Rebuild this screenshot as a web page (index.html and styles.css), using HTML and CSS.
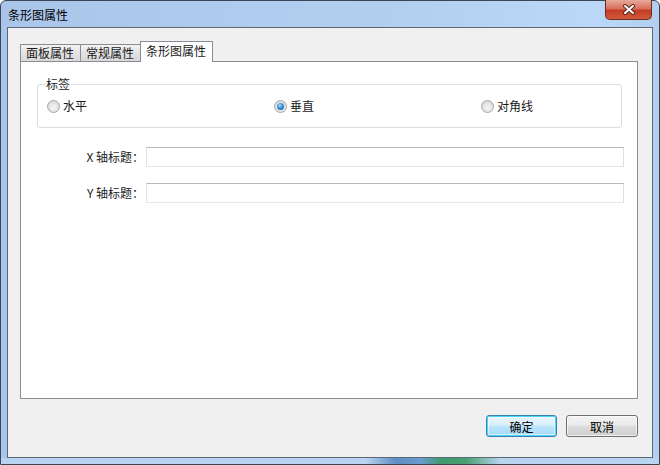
FILE: index.html
```html
<!DOCTYPE html>
<html lang="zh-CN">

<head>
    <meta charset="UTF-8" />
    <title>条形图属性</title>
    <link rel="stylesheet" href="styles.css">
</head>

<body>
    <div class="window">
        <div class="titlebar">
            <span class="title">条形图属性</span>
            <div class="close">
                <svg width="14" height="11" viewBox="0 0 14 11">
                    <path d="M3 2 L11 9 M11 2 L3 9" stroke="#5a2a22" stroke-width="4" stroke-linecap="round" />
                    <path d="M3 2 L11 9 M11 2 L3 9" stroke="#ffffff" stroke-width="2" stroke-linecap="round" />
                </svg>
            </div>
        </div>

        <div class="client">
            <ul class="tabs">
                <li>面板属性</li>
                <li>常规属性</li>
                <li class="active">条形图属性</li>
            </ul>

            <div class="panel">
                <fieldset class="group">
                    <legend>标签</legend>
                    <div class="radios">
                        <label class="option"><span class="radio"></span>水平</label>
                        <label class="option"><span class="radio on"></span>垂直</label>
                        <label class="option"><span class="radio"></span>对角线</label>
                    </div>
                </fieldset>

                <div class="form-row">
                    <label>X 轴标题：</label>
                    <input type="text" class="textbox">
                </div>
                <div class="form-row">
                    <label>Y 轴标题：</label>
                    <input type="text" class="textbox">
                </div>
            </div>

            <div class="buttons">
                <button class="btn default">确定</button>
                <button class="btn">取消</button>
            </div>
        </div>
    </div>
</body>

</html>
```

FILE: styles.css
```css
* {
    margin: 0;
    padding: 0;
    box-sizing: border-box;
}

body {
    font-family: "Noto Sans CJK SC", "Liberation Sans", sans-serif;
    font-size: 12px;
    color: #1a1a1a;
    background: #fff;
}

.window {
    width: 660px;
    height: 465px;
    display: flex;
    flex-direction: column;
    border: 1px solid #3a4654;
    border-radius: 6px 6px 0 0;
    background:
        linear-gradient(90deg, #b9d4f0 0, #b9d4f0 365px, #5e8ec4 395px, #6a9ccf 420px, #3f9a6c 440px, #4aa070 465px, #b9d4f0 500px) bottom / 100% 6px no-repeat,
        linear-gradient(90deg, #a9c6ea 0%, #b3cff0 60%, #bcd8f8 90%, #b3cff0 100%);
}

/* barra de titulo */
.titlebar {
    height: 27px;
    display: flex;
    align-items: flex-start;
    padding-left: 7px;
}

.title {
    margin-top: 6px;
    line-height: 16px;
    color: #000;
}

.close {
    margin-left: auto;
    margin-right: 7px;
    margin-top: -1px;
    width: 47px;
    height: 20px;
    display: flex;
    align-items: center;
    justify-content: center;
    border: 1px solid #6d2b22;
    border-top: none;
    border-radius: 0 0 5px 5px;
    background: linear-gradient(#e9a999 0%, #d7705c 45%, #c43c25 55%, #cf5a3c 100%);
}

/* area cliente */
.client {
    flex: 1;
    margin: 0 6px 6px;
    border: 1px solid #5d6876;
    background: #f0f0f0;
    padding: 13px 14px 20px 12px;
    display: flex;
    flex-direction: column;
}

.tabs {
    list-style: none;
    display: flex;
    align-items: flex-end;
    height: 20px;
    position: relative;
    z-index: 1;
}

.tabs li {
    height: 17px;
    line-height: 15px;
    padding: 0 6px 0 5px;
    border: 1px solid #898c95;
    border-bottom: none;
    margin-right: -1px;
    background: linear-gradient(#f3f3f3, #e3e3e3 50%, #d9d9d9);
}

.tabs li.active {
    height: 21px;
    margin-bottom: -1px;
    line-height: 18px;
    background: #fff;
}

.panel {
    height: 338px;
    background: #fff;
    border: 1px solid #898c95;
    padding: 0 13px 0 0;
}

.group {
    margin: 14px 2px 0 16px;
    border: 1px solid #d5dfe5;
    border-radius: 3px;
    padding: 0 0 13px 9px;
}

.group legend {
    margin-left: -2px;
    padding: 0 1px;
    line-height: 16px;
}

.radios {
    display: grid;
    grid-template-columns: 227px 207px 1fr;
    padding-top: 6px;
}

.option {
    display: flex;
    align-items: center;
    gap: 3px;
    line-height: 16px;
}

.radio {
    width: 13px;
    height: 13px;
    border-radius: 50%;
    border: 1px solid #a8a8a8;
    background: radial-gradient(circle at 50% 60%, #f6f6f6 0, #e2e2e2 55%, #cfcfcf 100%);
    display: inline-flex;
    align-items: center;
    justify-content: center;
}

.radio.on::after {
    content: "";
    width: 7px;
    height: 7px;
    border-radius: 50%;
    background: radial-gradient(circle at 40% 35%, #a9dcff 0, #3c8ed6 45%, #1a4f88 100%);
}

.form-row {
    display: grid;
    grid-template-columns: 123px 1fr;
    column-gap: 2px;
    align-items: center;
    margin-top: 19px;
}

.form-row + .form-row {
    margin-top: 16px;
}

.form-row label {
    text-align: right;
    line-height: 16px;
    color: #222;
}

.textbox {
    height: 20px;
    border: 1px solid;
    border-color: #b5b8bd #dbdfe6 #e3e9ef #e2e3ea;
    background: #fff;
    outline: none;
}

.buttons {
    display: flex;
    justify-content: flex-end;
    gap: 9px;
    margin-top: 16px;
}

.btn {
    width: 72px;
    height: 22px;
    font: inherit;
    color: #000;
    border: 1px solid #707070;
    border-radius: 3px;
    background: linear-gradient(#f2f2f2 0%, #ebebeb 45%, #dddddd 50%, #cfcfcf 100%);
    box-shadow: inset 0 0 0 1px rgba(255, 255, 255, 0.7);
}

.btn.default {
    width: 71px;
    border-color: #3c7fb1;
    background: linear-gradient(#eaf6fd 0%, #d9f0fc 45%, #bee6fd 50%, #a7d9f5 100%);
    box-shadow: inset 0 0 0 1px #48d8fb, inset 0 0 0 2px rgba(255, 255, 255, 0.5);
}
```
